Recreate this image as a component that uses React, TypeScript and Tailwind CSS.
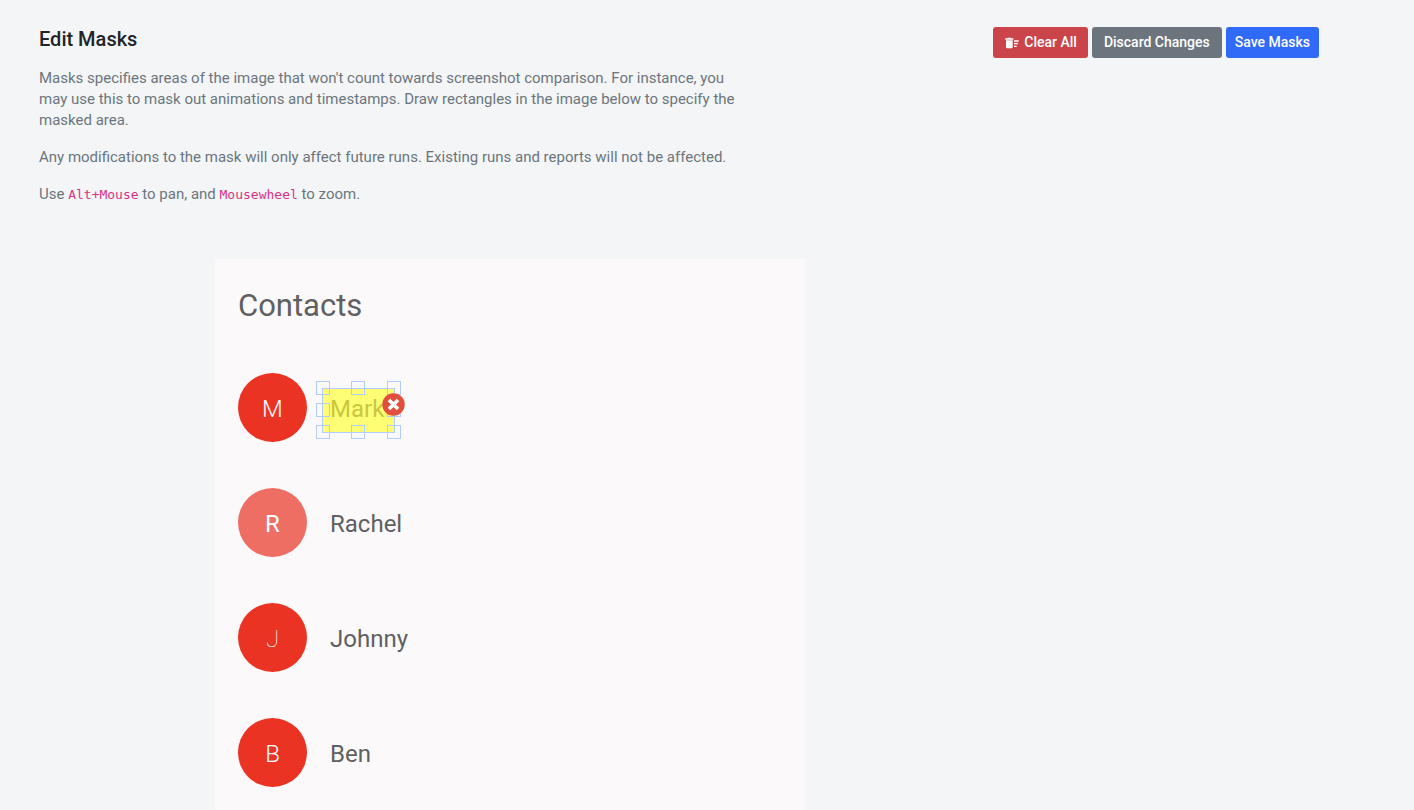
import React from "react";
import { MdDeleteSweep } from "react-icons/md";

type Contact = { name: string; circle: string; letter: string; masked?: boolean };

const contacts: Contact[] = [
  { name: "Mark", circle: "bg-[#ea3323]", letter: "font-light", masked: true },
  { name: "Rachel", circle: "bg-[#ee6e63]", letter: "font-normal" },
  { name: "Johnny", circle: "bg-[#ea3323]", letter: "font-thin" },
  { name: "Ben", circle: "bg-[#ea3323]", letter: "font-light" },
];

const handles = [
  { label: "Resize top left", place: "-left-[6px] -top-[7px]" },
  { label: "Resize top", place: "left-[29px] -top-[7px]" },
  { label: "Resize top right", place: "-right-[6px] -top-[7px]" },
  { label: "Resize left", place: "-left-[6px] top-[15px]" },
  { label: "Resize right", place: "-right-[6px] top-[15px]" },
  { label: "Resize bottom left", place: "-left-[6px] -bottom-[6px]" },
  { label: "Resize bottom", place: "left-[29px] -bottom-[6px]" },
  { label: "Resize bottom right", place: "-right-[6px] -bottom-[6px]" },
];

function Mask() {
  return (
    <div className="absolute -left-2 -top-px h-[45px] w-[73px] bg-[rgba(255,255,45,0.65)] outline outline-1 -outline-offset-1 outline-[#b2ccff]">
      {handles.map((h) => (
        <button
          key={h.label}
          type="button"
          aria-label={h.label}
          className={`absolute size-[14px] border border-[#b2ccff] ${h.place}`}
        />
      ))}
      <button type="button" aria-label="Remove mask" className="absolute -right-[10px] top-[5px] size-[23px]">
        <svg viewBox="0 0 23 23" className="size-full">
          <circle cx="11.5" cy="11.5" r="11.2" fill="#e34f3f" />
          <path d="M7 7l9 9M16 7l-9 9" stroke="#fff" strokeWidth="3.6" />
        </svg>
      </button>
    </div>
  );
}

function ActionButton({ look, children }: { look: string; children: React.ReactNode }) {
  return (
    <button
      type="button"
      className={`flex h-[31px] items-center gap-1 rounded-[3px] text-sm leading-[21px] font-medium text-white ${look}`}
    >
      {children}
    </button>
  );
}

export default function App() {
  return (
    <main className="flex min-h-screen flex-col bg-[#f3f5f7] pt-[27px] pr-[95px] pl-[39px] font-[Roboto,sans-serif]">
      <header className="flex items-start justify-between">
        <div className="max-w-[704px]">
          <h1 className="text-xl leading-[25px] font-medium text-[#212529]">Edit Masks</h1>
          <div className="mt-4 flex flex-col gap-4 text-[15px] leading-[21px] text-[#6c757d]">
            <p>
              Masks specifies areas of the image that won't count towards screenshot comparison. For instance, you
              may use this to mask out animations and timestamps. Draw rectangles in the image below to specify the
              masked area.
            </p>
            <p>
              Any modifications to the mask will only affect future runs. Existing runs and reports will not be
              affected.
            </p>
            <p>
              Use <code className="font-['DejaVu_Sans_Mono',monospace] text-[13px] text-[#d63384]">Alt+Mouse</code> to
              pan, and{" "}
              <code className="font-['DejaVu_Sans_Mono',monospace] text-[13px] text-[#d63384]">Mousewheel</code> to
              zoom.
            </p>
          </div>
        </div>
        <div className="flex gap-1">
          <ActionButton look="bg-[#cb444a] px-[11px]">
            <MdDeleteSweep className="size-4" />
            Clear All
          </ActionButton>
          <ActionButton look="bg-[#6c757d] px-3">Discard Changes</ActionButton>
          <ActionButton look="bg-[#2f6bf6] px-[9px]">Save Masks</ActionButton>
        </div>
      </header>

      <section
        aria-label="Screenshot"
        className="mt-[54px] ml-44 w-full max-w-[590px] flex-1 bg-[#fcf9fa] px-[23px] pt-7 text-[#5f6062]"
      >
        <h2 className="text-[31px] leading-[38px]">Contacts</h2>
        <ul className="mt-12 flex flex-col gap-[46px]">
          {contacts.map((c) => (
            <li key={c.name} className="flex items-center gap-[23px]">
              <span
                className={`flex size-[69px] items-center justify-center rounded-full pt-[2px] text-2xl text-white ${c.circle} ${c.letter}`}
              >
                {c.name[0]}
              </span>
              <div className="relative pt-[2px] text-2xl leading-9">
                {c.name}
                {c.masked && <Mask />}
              </div>
            </li>
          ))}
        </ul>
      </section>
    </main>
  );
}
